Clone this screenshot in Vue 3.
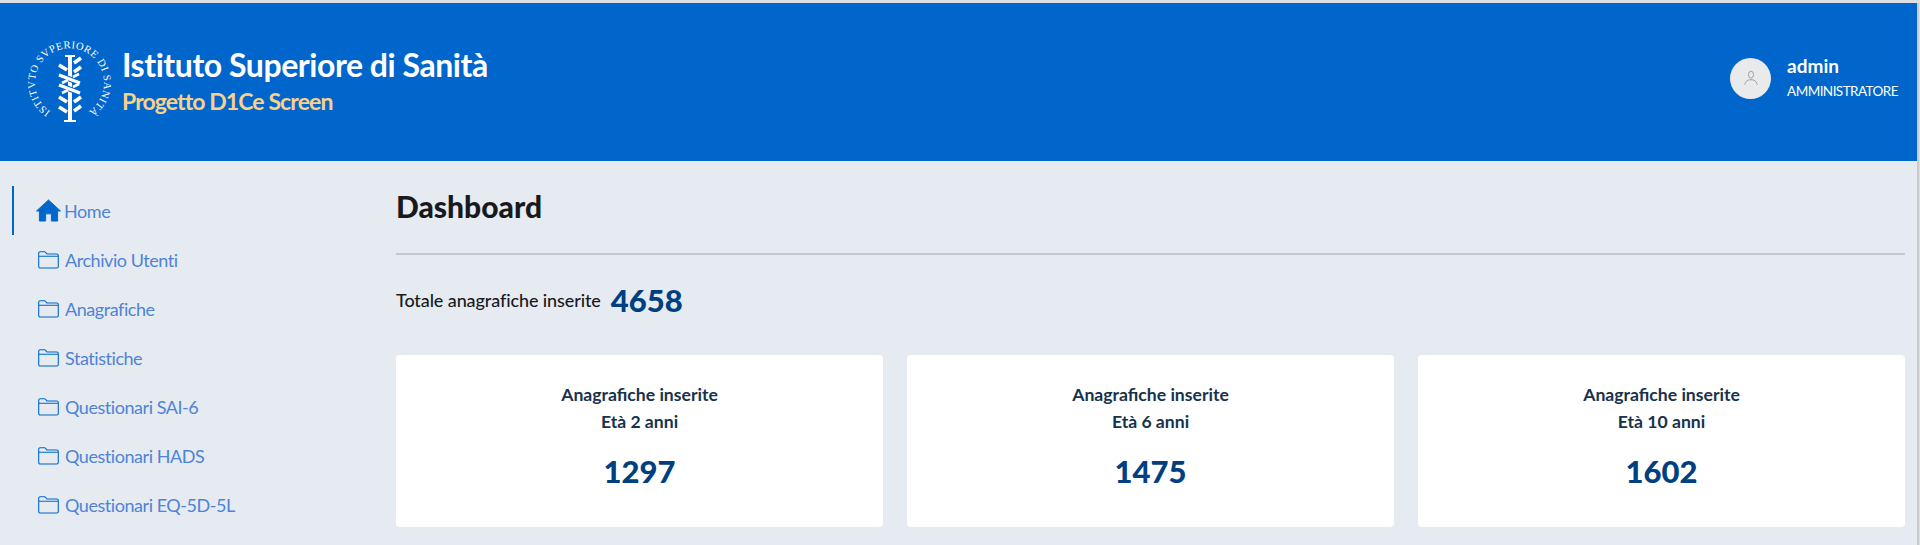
<script setup>
const menu = [
  { label: 'Home', active: true },
  { label: 'Archivio Utenti' },
  { label: 'Anagrafiche' },
  { label: 'Statistiche' },
  { label: 'Questionari SAI-6' },
  { label: 'Questionari HADS' },
  { label: 'Questionari EQ-5D-5L' },
];

const cards = [
  { age: 'Età 2 anni', total: 1297 },
  { age: 'Età 6 anni', total: 1475 },
  { age: 'Età 10 anni', total: 1602 },
];
</script>

<template>
  <div class="page">
    <header class="topbar">
      <div class="brand">
        <svg class="logo" viewBox="0 0 86 86" aria-hidden="true">
          <defs>
            <path id="seal-ring" d="M 24.500 72.500 A 34.500 34.500 0 1 1 62.500 72.500" />
          </defs>
          <text class="seal-text">
            <textPath href="#seal-ring" textLength="176" lengthAdjust="spacing">ISTITVTO SVPERIORE DI SANITÀ</textPath>
          </text>
          <path d="M44 17v65" stroke="#fff" stroke-width="4" fill="none" />
          <path d="M39 17h10M38 82h12" stroke="#fff" stroke-width="1.800" fill="none" />
          <path
            d="M48 24l7-5M48 33l7-5M33 26l8 5M33 58l8 5M48 63l7-5M33 68l8 5M48 72l7-5"
            stroke="#fff"
            stroke-width="3.600"
            fill="none"
          />
          <path d="M33 36l21 8M33 46l21 8" stroke="#0066cc" stroke-width="5.600" fill="none" />
          <path d="M33 36l21 8M33 46l21 8" stroke="#fff" stroke-width="3.400" fill="none" />
          <path d="M36 44l6-3M47 38l6-3M36 54l6-3M47 48l6-3" stroke="#fff" stroke-width="2.600" fill="none" />
        </svg>
        <div class="brand-text">
          <div class="brand-title">Istituto Superiore di Sanità</div>
          <div class="brand-sub">Progetto D1Ce Screen</div>
        </div>
      </div>
      <div class="user">
        <span class="avatar">
          <svg viewBox="0 0 24 24" width="20" height="20" fill="none" stroke="#9aa3ab" stroke-width="1.200">
            <ellipse cx="12" cy="8" rx="3" ry="4.200" />
            <path d="M4.500 20c.6-4 3.600-6 7.500-6s6.900 2 7.500 6" />
          </svg>
        </span>
        <div>
          <div class="user-name">admin</div>
          <div class="user-role">AMMINISTRATORE</div>
        </div>
      </div>
    </header>

    <div class="body">
      <nav class="sidebar">
        <a v-for="item in menu" :key="item.label" class="nav-item" :class="{ active: item.active }">
          <svg v-if="item.active" class="home-icon" viewBox="0 0 26 24" aria-hidden="true">
            <path d="M13 1 L25.500 12.500 L22.500 12.500 L22.500 23 L16 23 L16 15.500 L10 15.500 L10 23 L3.500 23 L3.500 12.500 L.5 12.500 Z" fill="#0066cc" stroke="#0066cc" stroke-linejoin="round" />
          </svg>
          <svg v-else class="folder-icon" viewBox="0 0 21 18" aria-hidden="true">
            <path d="M.7 15.500V2.200C.7 1.300 1.300.7 2.200.7h4.600L9 3h9.800c.9 0 1.500.6 1.500 1.500v11c0 .9-.6 1.500-1.500 1.500H2.200C1.300 17 .7 16.400.7 15.500ZM.7 5.200h19.600" fill="none" stroke="#0066cc" stroke-width="1.100" />
          </svg>
          <span>{{ item.label }}</span>
        </a>
      </nav>

      <main class="content">
        <h1 class="title">Dashboard</h1>
        <div class="total">
          <span class="total-label">Totale anagrafiche inserite</span>
          <span class="total-value">4658</span>
        </div>
        <section class="cards">
          <article v-for="card in cards" :key="card.age" class="card">
            <div class="card-title">Anagrafiche inserite</div>
            <div class="card-title">{{ card.age }}</div>
            <div class="card-value">{{ card.total }}</div>
          </article>
        </section>
      </main>
    </div>
  </div>
</template>

<style>
html,
body {
  margin: 0;
  height: 545px;
  overflow: hidden;
  background: #dcdfe3;
}
</style>

<style scoped>
.page {
  height: 542px;
  margin-top: 3px;
  margin-right: 1px;
  border-right: 2px solid #c9cbcd;
  background: #e6ebf2;
  font-family: Lato, "Noto Sans", sans-serif;
  overflow: hidden;
}

.topbar {
  height: 158px;
  background: #0066cc;
  color: #fff;
  display: flex;
  align-items: center;
  justify-content: space-between;
  padding: 0 19px 0 26px;
  box-sizing: border-box;
}

.brand {
  display: flex;
  align-items: center;
  gap: 10px;
}

.logo {
  width: 86px;
  height: 86px;
  overflow: visible;
}

.seal-text {
  font-family: "Liberation Serif", serif;
  font-size: 10.500px;
  fill: #fff;
}

.brand-text {
  margin-bottom: 4px;
}

.brand-title {
  font-size: 32px;
  font-weight: 700;
  line-height: 42px;
  letter-spacing: -0.45px;
}

.brand-sub {
  font-size: 23px;
  font-weight: 700;
  line-height: 30px;
  color: #f9d18a;
  letter-spacing: -0.9px;
}

.user {
  display: flex;
  align-items: center;
  gap: 16px;
  margin-bottom: 8px;
}

.avatar {
  width: 41px;
  height: 41px;
  border-radius: 50%;
  background: #e8eaec;
  display: flex;
  align-items: center;
  justify-content: center;
}

.user-name {
  font-size: 19px;
  font-weight: 700;
  line-height: 26px;
}

.user-role {
  font-size: 13.500px;
  line-height: 24px;
  letter-spacing: -0.55px;
}

.body {
  display: flex;
}

.sidebar {
  width: 396px;
  flex: none;
  padding-top: 25px;
  box-sizing: border-box;
}

.nav-item {
  height: 49px;
  display: flex;
  align-items: center;
  margin-left: 12px;
  padding-left: 22px;
  color: #4f83d6;
  font-size: 18px;
  letter-spacing: -0.45px;
  border-left: 2px solid transparent;
  box-sizing: border-box;
}

.nav-item.active {
  border-left-color: #0066cc;
}

.home-icon {
  width: 25px;
  height: 23px;
  margin-right: 3px;
}

.folder-icon {
  width: 21px;
  height: 18px;
  margin-left: 2px;
  margin-right: 6px;
}

.content {
  flex: 1;
  min-width: 0;
  padding-right: 12px;
}

.title {
  margin: 0;
  height: 94px;
  padding-top: 24px;
  box-sizing: border-box;
  font-size: 30px;
  line-height: 42px;
  font-weight: 900;
  color: #17191c;
  border-bottom: 2px solid #c3c9d1;
}

.total {
  display: flex;
  align-items: center;
  gap: 10px;
  height: 40px;
  margin-top: 25px;
}

.total-label {
  font-size: 18px;
  font-weight: 500;
  color: #17191c;
  letter-spacing: -0.1px;
}

.total-value {
  font-size: 31px;
  font-weight: 900;
  color: #004080;
}

.cards {
  display: grid;
  grid-template-columns: repeat(3, 1fr);
  gap: 24px;
  margin-top: 35px;
}

.card {
  background: #fff;
  border-radius: 4px;
  height: 172px;
  padding-top: 26px;
  box-sizing: border-box;
  text-align: center;
}

.card-title {
  font-size: 17.600px;
  font-weight: 700;
  line-height: 27px;
  color: #17324d;
}

.card-value {
  margin-top: 12px;
  font-size: 31px;
  font-weight: 900;
  line-height: 48px;
  color: #004080;
}
</style>
